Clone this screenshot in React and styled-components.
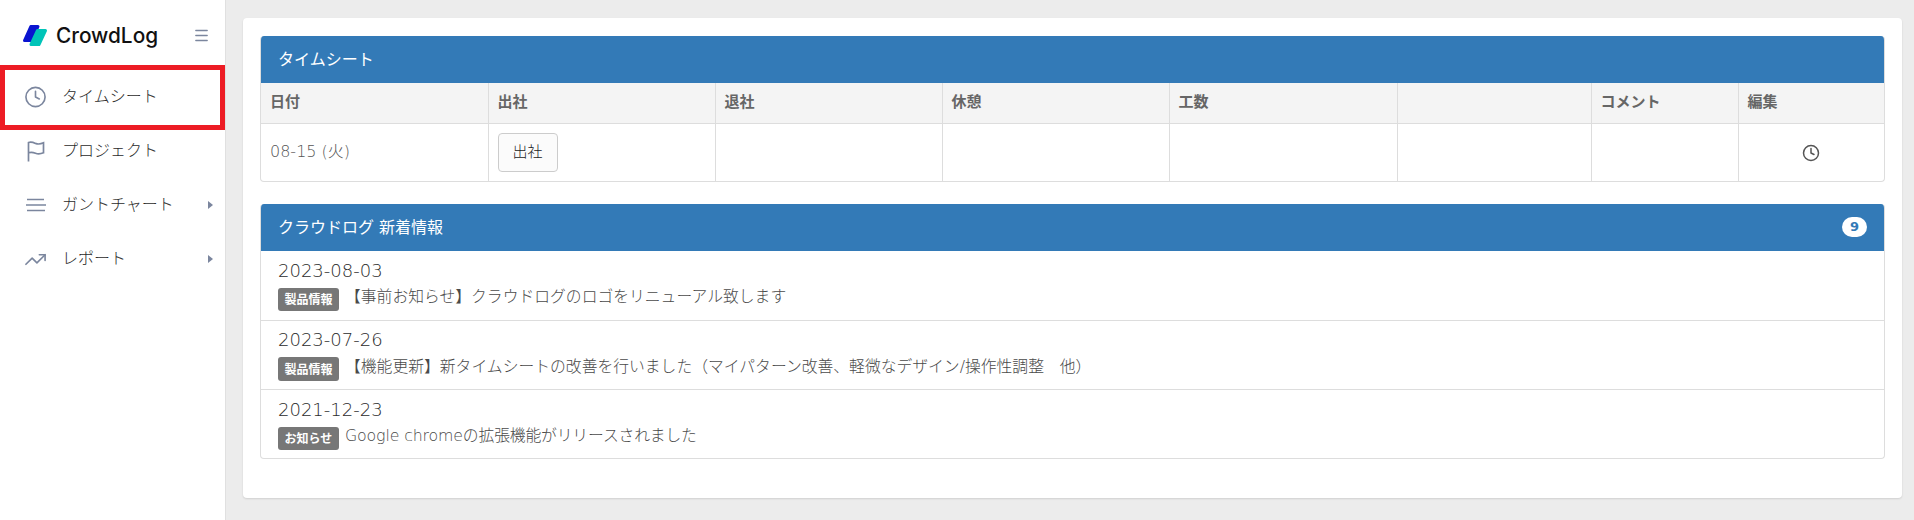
import React from 'react'
import styled, { createGlobalStyle } from 'styled-components'
import { Clock, Menu, TrendingUp } from 'lucide-react'

const GlobalStyle = createGlobalStyle`
  html, body { margin: 0; padding: 0; height: 100%; }
  body {
    background: #ececec;
    font-family: "DejaVu Sans", "Noto Sans CJK JP", sans-serif;
    color: #666;
    overflow: hidden;
  }
`

const columns = [
  { label: '日付', width: 227 },
  { label: '出社', width: 227 },
  { label: '退社', width: 227 },
  { label: '休憩', width: 227 },
  { label: '工数', width: 228 },
  { label: '', width: 194 },
  { label: 'コメント', width: 147 },
  { label: '編集', width: 146 },
]

const news = [
  { date: '2023-08-03', tag: '製品情報', text: '【事前お知らせ】クラウドログのロゴをリニューアル致します' },
  { date: '2023-07-26', tag: '製品情報', text: '【機能更新】新タイムシートの改善を行いました（マイパターン改善、軽微なデザイン/操作性調整　他）' },
  { date: '2021-12-23', tag: 'お知らせ', text: 'Google chromeの拡張機能がリリースされました', tight: true },
]

function FlagIcon() {
  return (
    <svg width="18" height="21" viewBox="0 0 18 21" fill="none" stroke="#7b869e" strokeWidth="1.7">
      <path d="M1.5 20.5V1.5C3.5 .8 5.5 1 8.5 2.4C11 3.4 13.5 3.2 16.5 1.8V11.8C13.5 13 11 13.2 8.5 12.2C5.5 11 3.5 11 1.5 11.8" />
    </svg>
  )
}

function LinesIcon() {
  return (
    <svg width="22" height="14" viewBox="0 0 22 14" fill="none" stroke="#7b869e" strokeWidth="1.6">
      <path d="M2 1.5H19M1 7H21M2 12.5H20" />
    </svg>
  )
}

function Logo() {
  return (
    <svg width="24" height="21" viewBox="0 0 24 21" strokeWidth="3" strokeLinejoin="round">
      <path d="M7.8 1.5H15L9 15.5H1.5Z" fill="#0a14d0" stroke="#0a14d0" />
      <path d="M14.5 5.5H22.5L16 19.5H8Z" fill="#00c4b8" stroke="#00c4b8" />
    </svg>
  )
}

function NavRow({ icon, label, selected, caret }) {
  return (
    <NavItem>
      <NavIcon>{icon}</NavIcon>
      <NavLabel>{label}</NavLabel>
      {caret && <Caret />}
      {selected && <Highlight />}
    </NavItem>
  )
}

export default function App() {
  return (
    <Page>
      <GlobalStyle />
      <Sidebar>
        <Brand>
          <Logo />
          <BrandName>CrowdLog</BrandName>
          <Burger><Menu size={17} color="#7b869e" strokeWidth={2} /></Burger>
        </Brand>
        <Nav>
          <NavRow selected label="タイムシート" icon={<Clock size={24} color="#7b869e" strokeWidth={1.7} />} />
          <NavRow label="プロジェクト" icon={<FlagIcon />} />
          <NavRow caret label="ガントチャート" icon={<LinesIcon />} />
          <NavRow caret label="レポート" icon={<TrendingUp size={25} color="#7b869e" strokeWidth={1.7} />} />
        </Nav>
      </Sidebar>
      <Main>
        <Card>
          <Panel>
            <PanelHeader>タイムシート</PanelHeader>
            <Table>
              <colgroup>
                {columns.map((c, i) => <col key={i} width={c.width} />)}
              </colgroup>
              <thead>
                <tr>{columns.map((c, i) => <Th key={i}>{c.label}</Th>)}</tr>
              </thead>
              <tbody>
                <tr>
                  <Td $raised>08-15 (火)</Td>
                  <Td><PunchButton>出社</PunchButton></Td>
                  <Td /><Td /><Td /><Td /><Td />
                  <Td $center><Clock size={18} color="#555" strokeWidth={2} /></Td>
                </tr>
              </tbody>
            </Table>
          </Panel>
          <Panel>
            <PanelHeader>
              クラウドログ 新着情報
              <Badge>9</Badge>
            </PanelHeader>
            <NewsList>
              {news.map((n) => (
                <NewsItem key={n.date}>
                  <NewsDate>{n.date}</NewsDate>
                  <NewsLine>
                    <Tag>{n.tag}</Tag>
                    <NewsText $tight={n.tight}>{n.text}</NewsText>
                  </NewsLine>
                </NewsItem>
              ))}
            </NewsList>
          </Panel>
        </Card>
      </Main>
    </Page>
  )
}

const Page = styled.div`
  display: flex;
  width: 1914px;
  height: 520px;
`

const Sidebar = styled.aside`
  width: 225px;
  flex: none;
  background: #fff;
  border-right: 1px solid #e0e0e0;
`

const Brand = styled.div`
  display: flex;
  align-items: center;
  height: 70px;
  padding: 0 15px 0 23px;
  box-sizing: border-box;
`

const BrandName = styled.span`
  margin-left: 9px;
  font-family: Inter, sans-serif;
  font-size: 20.8px;
  font-weight: 500;
  color: #111;
`

const Burger = styled.span`
  display: flex;
  margin-left: auto;
`

const Nav = styled.nav`
  display: flex;
  flex-direction: column;
`

const NavItem = styled.div`
  position: relative;
  display: flex;
  align-items: center;
  height: 54px;
  padding: 0 12px 0 24px;
`

const NavIcon = styled.span`
  display: flex;
  justify-content: center;
  width: 23px;
  margin-right: 15px;
`

const NavLabel = styled.span`
  padding-bottom: 4px;
  font-size: 16px;
  font-weight: 300;
  color: #2b2b2b;
`

const Caret = styled.span`
  margin-left: auto;
  width: 0;
  height: 0;
  border-left: 5px solid #7b869e;
  border-top: 4px solid transparent;
  border-bottom: 4px solid transparent;
`

const Highlight = styled.span`
  position: absolute;
  left: 0;
  right: 0;
  top: -5px;
  bottom: -6px;
  border: 5px solid #ed1c24;
`

const Main = styled.main`
  flex: 1;
  padding: 18px 12px 22px 17px;
  min-width: 0;
`

const Card = styled.section`
  height: 100%;
  box-sizing: border-box;
  padding: 18px 17px 0;
  background: #fff;
  border-radius: 4px;
  box-shadow: 0 1px 2px rgba(0, 0, 0, 0.12);
`

const Panel = styled.div`
  margin-bottom: 22px;
  background: #fff;
  border: 1px solid #ddd;
  border-top: none;
  border-radius: 4px;
  overflow: hidden;
`

const PanelHeader = styled.div`
  display: flex;
  align-items: center;
  justify-content: space-between;
  height: 47px;
  box-sizing: border-box;
  margin: 0 -1px;
  padding: 0 18px 4px;
  background: #337ab7;
  color: #fff;
  font-size: 16px;
`

const Badge = styled.span`
  display: inline-flex;
  align-items: center;
  justify-content: center;
  width: 25px;
  height: 20px;
  margin-top: 2px;
  border-radius: 10px;
  background: #fff;
  color: #337ab7;
  font-size: 13px;
  font-weight: 700;
`

const Table = styled.table`
  width: 100%;
  table-layout: fixed;
  border-collapse: collapse;
`

const Th = styled.th`
  height: 40px;
  box-sizing: border-box;
  padding: 0 9px 4px;
  background: #f4f4f4;
  border-right: 1px solid #ddd;
  border-bottom: 1px solid #ddd;
  text-align: left;
  font-size: 15px;
  font-weight: 700;
  color: #666;
  &:last-child { border-right: none; }
`

const Td = styled.td`
  height: 58px;
  box-sizing: border-box;
  padding: 0 9px ${(p) => (p.$raised ? '4px' : '0')};
  border-right: 1px solid #ddd;
  font-size: 16px;
  font-weight: 300;
  color: #555;
  text-align: ${(p) => (p.$center ? 'center' : 'left')};
  vertical-align: middle;
  &:last-child { border-right: none; }
  svg { display: inline-block; vertical-align: middle; }
`

const PunchButton = styled.button`
  width: 60px;
  height: 39px;
  padding: 0 0 3px;
  background: #fbfbfb;
  border: 1px solid #ccc;
  border-radius: 4px;
  font-family: inherit;
  font-size: 15px;
  font-weight: 300;
  color: #222;
`

const NewsList = styled.div`
  display: flex;
  flex-direction: column;
`

const NewsItem = styled.div`
  height: 69.5px;
  padding: 7.5px 17px 0;
  box-sizing: border-box;
  border-bottom: 1px solid #ddd;
  &:last-child { border-bottom: none; height: 68px; }
`

const NewsDate = styled.div`
  font-size: 18px;
  font-weight: 300;
  line-height: 23px;
  color: #2b2b2b;
`

const NewsLine = styled.div`
  display: flex;
  align-items: center;
  height: 23.5px;
  margin-top: 6px;
`

const Tag = styled.span`
  display: inline-flex;
  align-items: center;
  justify-content: center;
  width: 61px;
  height: 23.5px;
  padding-bottom: 1px;
  box-sizing: border-box;
  border-radius: 3px;
  background: #777;
  color: #fff;
  font-size: 12px;
  font-weight: 700;
  flex: none;
`

const NewsText = styled.span`
  margin-left: 6px;
  padding-bottom: 7px;
  font-size: 15.8px;
  font-weight: 300;
  color: #4a4a4a;
  letter-spacing: ${(p) => (p.$tight ? '-0.15px' : '0')};
`
